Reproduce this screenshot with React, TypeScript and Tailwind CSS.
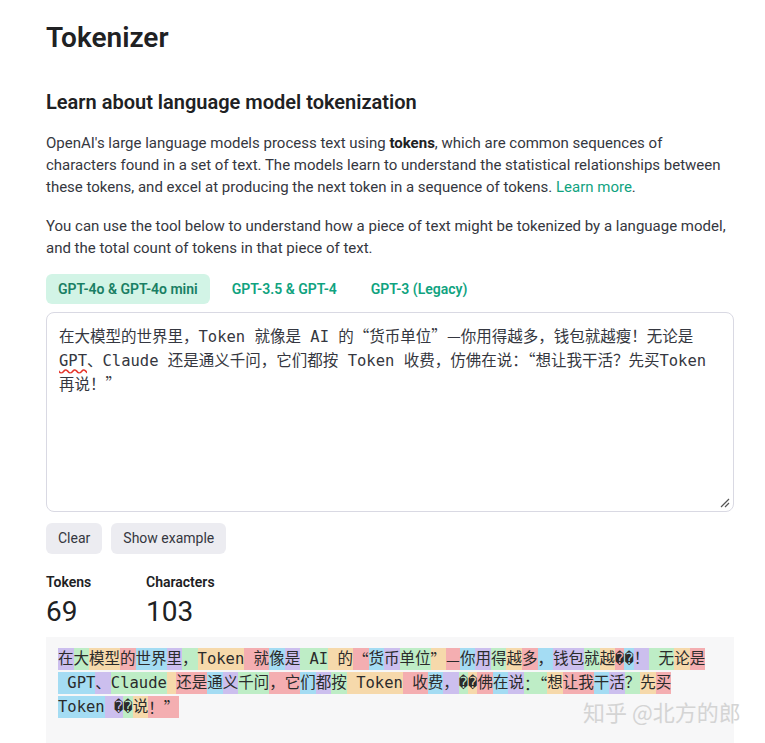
import { Fragment } from "react";

type Tint = "p" | "g" | "y" | "r" | "b";

const TINT: Record<Tint, string> = {
  p: "bg-[rgba(107,64,216,0.3)]",
  g: "bg-[rgba(104,222,122,0.4)]",
  y: "bg-[rgba(244,172,54,0.4)]",
  r: "bg-[rgba(239,65,70,0.4)]",
  b: "bg-[rgba(39,181,234,0.4)]",
};

const BAD = "\uFFFD";

// token text + highlight colour, as the tokenizer paints them
const TOKENS: [string, Tint][] = [
  ["在", "p"], ["大", "g"], ["模型", "y"], ["的", "r"], ["世界", "b"], ["里", "p"],
  ["，", "g"], ["Token", "y"], [" 就", "r"], ["像", "b"], ["是", "p"], [" AI", "g"],
  [" 的", "y"], ["“", "r"], ["货", "b"], ["币", "p"], ["单位", "g"], ["”", "y"],
  ["—", "r"], ["你", "b"], ["用", "p"], ["得", "g"], ["越", "y"], ["多", "r"],
  ["，", "b"], ["钱包", "p"], ["就", "g"], ["越", "y"], [BAD, "r"], [BAD, "b"],
  ["！", "p"], [" 无", "g"], ["论", "y"], ["是", "r"],
  [" GPT", "b"], ["、", "p"], ["Claude", "g"], [" ", "y"], ["还是", "r"], ["通", "b"],
  ["义", "p"], ["千问", "g"], ["，它", "r"], ["们", "b"], ["都", "p"], ["按", "g"],
  [" Token", "y"], [" 收", "r"], ["费", "b"], ["，", "p"], [BAD, "g"], [BAD, "y"],
  ["佛", "r"], ["在", "b"], ["说", "p"], ["：“", "g"], ["想", "y"], ["让我", "r"],
  ["干", "b"], ["活", "p"], ["？", "g"], ["先", "y"], ["买", "r"],
  ["Token", "b"], [" " + BAD, "p"], [BAD, "g"], ["说", "y"], ["！”", "r"],
];

// curly quotes and the dash come from the CJK face, full width
function Cjk({ text, flat = false }: { text: string; flat?: boolean }) {
  return (
    <>
      {text.split(/([“”—])/).map((part, i) =>
        /[“”—]/.test(part) ? (
          <span key={i} className={flat ? "font-['Noto_Sans_CJK_SC'] leading-[0px]" : "font-['Noto_Sans_CJK_SC']"}>
            {part}
          </span>
        ) : (
          <Fragment key={i}>{part}</Fragment>
        ),
      )}
    </>
  );
}

const mono = "font-['DejaVu_Sans_Mono','Noto_Sans_CJK_SC',monospace]";

export default function App() {
  return (
    <div className="relative min-h-[743px] bg-white font-['Roboto',sans-serif] text-[#353740]">
      <div className="ml-[46px] w-[688px] pt-5">
        <h1 className="text-[28px] leading-9 font-semibold text-[#202123]">Tokenizer</h1>

        <h2 className="mt-8 text-[20px] leading-7 font-semibold text-[#202123]">
          Learn about language model tokenization
        </h2>

        <p className="mt-4 text-[15px] leading-[22px]">
          OpenAI's large language models process text using <b className="font-bold text-[#202123]">tokens</b>, which
          are common sequences of characters found in a set of text. The models learn to understand the
          statistical relationships between these tokens, and excel at producing the next token in a sequence
          of tokens. <a className="text-[#10a37f]">Learn more</a>.
        </p>

        <p className="mt-[17px] text-[15px] leading-[22px]">
          You can use the tool below to understand how a piece of text might be tokenized by a language model,
          and the total count of tokens in that piece of text.
        </p>

        <div className="mt-[15px] flex gap-[10px] text-[14px] font-semibold">
          <button type="button" className="h-[30px] rounded-md bg-[#d2f4e6] px-3 text-[#1a7f64]">
            GPT-4o &amp; GPT-4o mini
          </button>
          <button type="button" className="h-[30px] rounded-md px-3 text-[#10a37f]">
            GPT-3.5 &amp; GPT-4
          </button>
          <button type="button" className="h-[30px] rounded-md px-3 text-[#10a37f]">
            GPT-3 (Legacy)
          </button>
        </div>

        <div
          className={`relative mt-[8px] h-[200px] rounded-lg border border-[#d9d9e3] px-3 pt-[12px] text-[15.5px] leading-6 whitespace-pre-wrap text-[#353740] ${mono}`}
        >
          <Cjk flat text="在大模型的世界里，Token 就像是 AI 的“货币单位”—你用得越多，钱包就越瘦！无论是 " />
          <span className="underline decoration-wavy decoration-[#e5352b] underline-offset-2">GPT</span>
          <Cjk flat text="、Claude 还是通义千问，它们都按 Token 收费，仿佛在说：“想让我干活？先买Token 再说！”" />
          <svg
            className="absolute right-[3px] bottom-[3px]"
            width="10"
            height="10"
            viewBox="0 0 10 10"
            fill="none"
            stroke="#555"
            strokeWidth="1.2"
          >
            <path d="M9 1L1 9M9 5L5 9" />
          </svg>
        </div>

        <div className="mt-[11px] flex gap-[9px] text-[14px]">
          <button type="button" className="h-[31px] rounded-md bg-[#ececf1] px-3 text-[#353740]">
            Clear
          </button>
          <button type="button" className="h-[31px] rounded-md bg-[#ececf1] px-3 text-[#353740]">
            Show example
          </button>
        </div>

        <div className="mt-[18px] flex">
          <div className="w-[100px]">
            <div className="text-[14px] leading-5 font-semibold text-[#202123]">Tokens</div>
            <div className="mt-[4px] text-[28px] leading-8 text-[#202123]">69</div>
          </div>
          <div className="w-[100px]">
            <div className="text-[14px] leading-5 font-semibold text-[#202123]">Characters</div>
            <div className="mt-[4px] text-[28px] leading-8 text-[#202123]">103</div>
          </div>
        </div>

        <div
          className={`mt-[9px] h-[200px] bg-[#f7f7f8] pt-[10px] pr-6 pl-3 text-[15.5px] leading-6 text-[#2b2b2b] ${mono}`}
        >
          {TOKENS.map(([text, tint], i) => (
            <span
              key={i}
              className={`my-px inline-block h-[22px] align-top leading-[22px] whitespace-pre ${TINT[tint]}`}
            >
              <Cjk text={text} />
            </span>
          ))}
        </div>
      </div>

      <div className="pointer-events-none absolute top-[697px] left-[583px] font-['Noto_Sans_CJK_SC',sans-serif] text-[22px] leading-7 text-[#d4d4d4]">
        知乎 @北方的郎
      </div>
    </div>
  );
}
